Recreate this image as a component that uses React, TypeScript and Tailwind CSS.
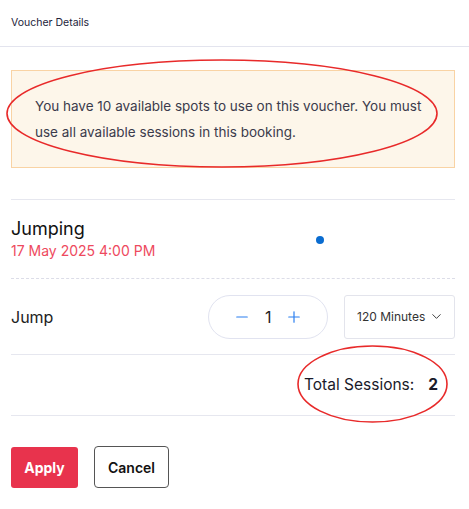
import { Minus, Plus, ChevronDown } from 'lucide-react'

export default function App() {
  return (
    <div
      className="relative w-[469px] h-[509px] bg-white text-[#1d1d2b] overflow-hidden"
      style={{ fontFamily: 'Inter, "Liberation Sans", sans-serif' }}
    >
      <div className="h-[47px] flex items-center px-[11px] border-b border-[#e3e4ee] text-[10.5px] text-[#23233a]">
        Voucher Details
      </div>

      <div className="pl-[11px] pr-[14px]">
        <div className="mt-[23px] h-[98px] border border-[#f9d3a4] bg-[#fdf6ea] px-[23px] flex items-center">
          <p className="text-[13.5px] leading-[26px] text-[#3b3b4c]">
            You have 10 available spots to use on this voucher. You must use all available sessions in this booking.
          </p>
        </div>

        <div className="mt-[31px] border-t border-[#e6e7ef]" />

        <div className="h-[78px] flex items-center">
          <div className="flex-1">
            <div className="text-[18px] leading-[24px] text-[#111]">Jumping</div>
            <div className="text-[14px] leading-[20px] text-[#ee4a5e]">17 May 2025 4:00 PM</div>
          </div>
          <div className="w-[8px] h-[8px] rounded-full bg-[#0a6cd0] mr-[131px] mt-[2px]" />
        </div>

        <div className="border-t border-dashed border-[#dcdde8]" />

        <div className="h-[75px] flex items-center">
          <div className="flex-1 text-[16px] text-[#222]">Jump</div>
          <div className="w-[120px] h-[44px] rounded-full border border-[#e1e3f0] flex items-center justify-center gap-[14px]">
            <Minus size={18} strokeWidth={1.6} className="text-[#2b7ff0]" />
            <span className="text-[16px] text-[#222] w-[6px] text-center">1</span>
            <Plus size={18} strokeWidth={1.6} className="text-[#2b7ff0]" />
          </div>
          <div className="ml-[16px] w-[111px] h-[44px] rounded-[3px] border border-[#e3e4ec] flex items-center justify-between pl-[12px] pr-[10px] text-[12px] text-[#333] whitespace-nowrap">
            <span>120 Minutes</span>
            <ChevronDown size={15} strokeWidth={1.5} className="text-[#333]" />
          </div>
        </div>

        <div className="border-t border-[#e6e7ef]" />

        <div className="h-[60px] flex items-center justify-end pr-[17px] text-[15.5px] text-[#1a1a2a]">
          <span>Total Sessions:</span>
          <span className="ml-[14px] font-bold">2</span>
        </div>

        <div className="border-t border-[#e6e7ef]" />

        <div className="mt-[30px] flex items-center gap-[16px]">
          <button className="w-[67px] h-[41px] rounded-[3px] bg-[#e8334d] text-white font-bold text-[14px]">
            Apply
          </button>
          <button className="w-[75px] h-[42px] rounded-[4px] border border-[#555] bg-white text-[#111] font-semibold text-[14px]">
            Cancel
          </button>
        </div>
      </div>

      <svg className="absolute inset-0 pointer-events-none" width="469" height="509">
        <ellipse cx="222" cy="113.5" rx="215" ry="53.5" fill="none" stroke="#e82a2a" strokeWidth="1.6" />
        <ellipse cx="372.5" cy="384" rx="74.5" ry="38" fill="none" stroke="#e82a2a" strokeWidth="1.6" />
      </svg>
    </div>
  )
}
